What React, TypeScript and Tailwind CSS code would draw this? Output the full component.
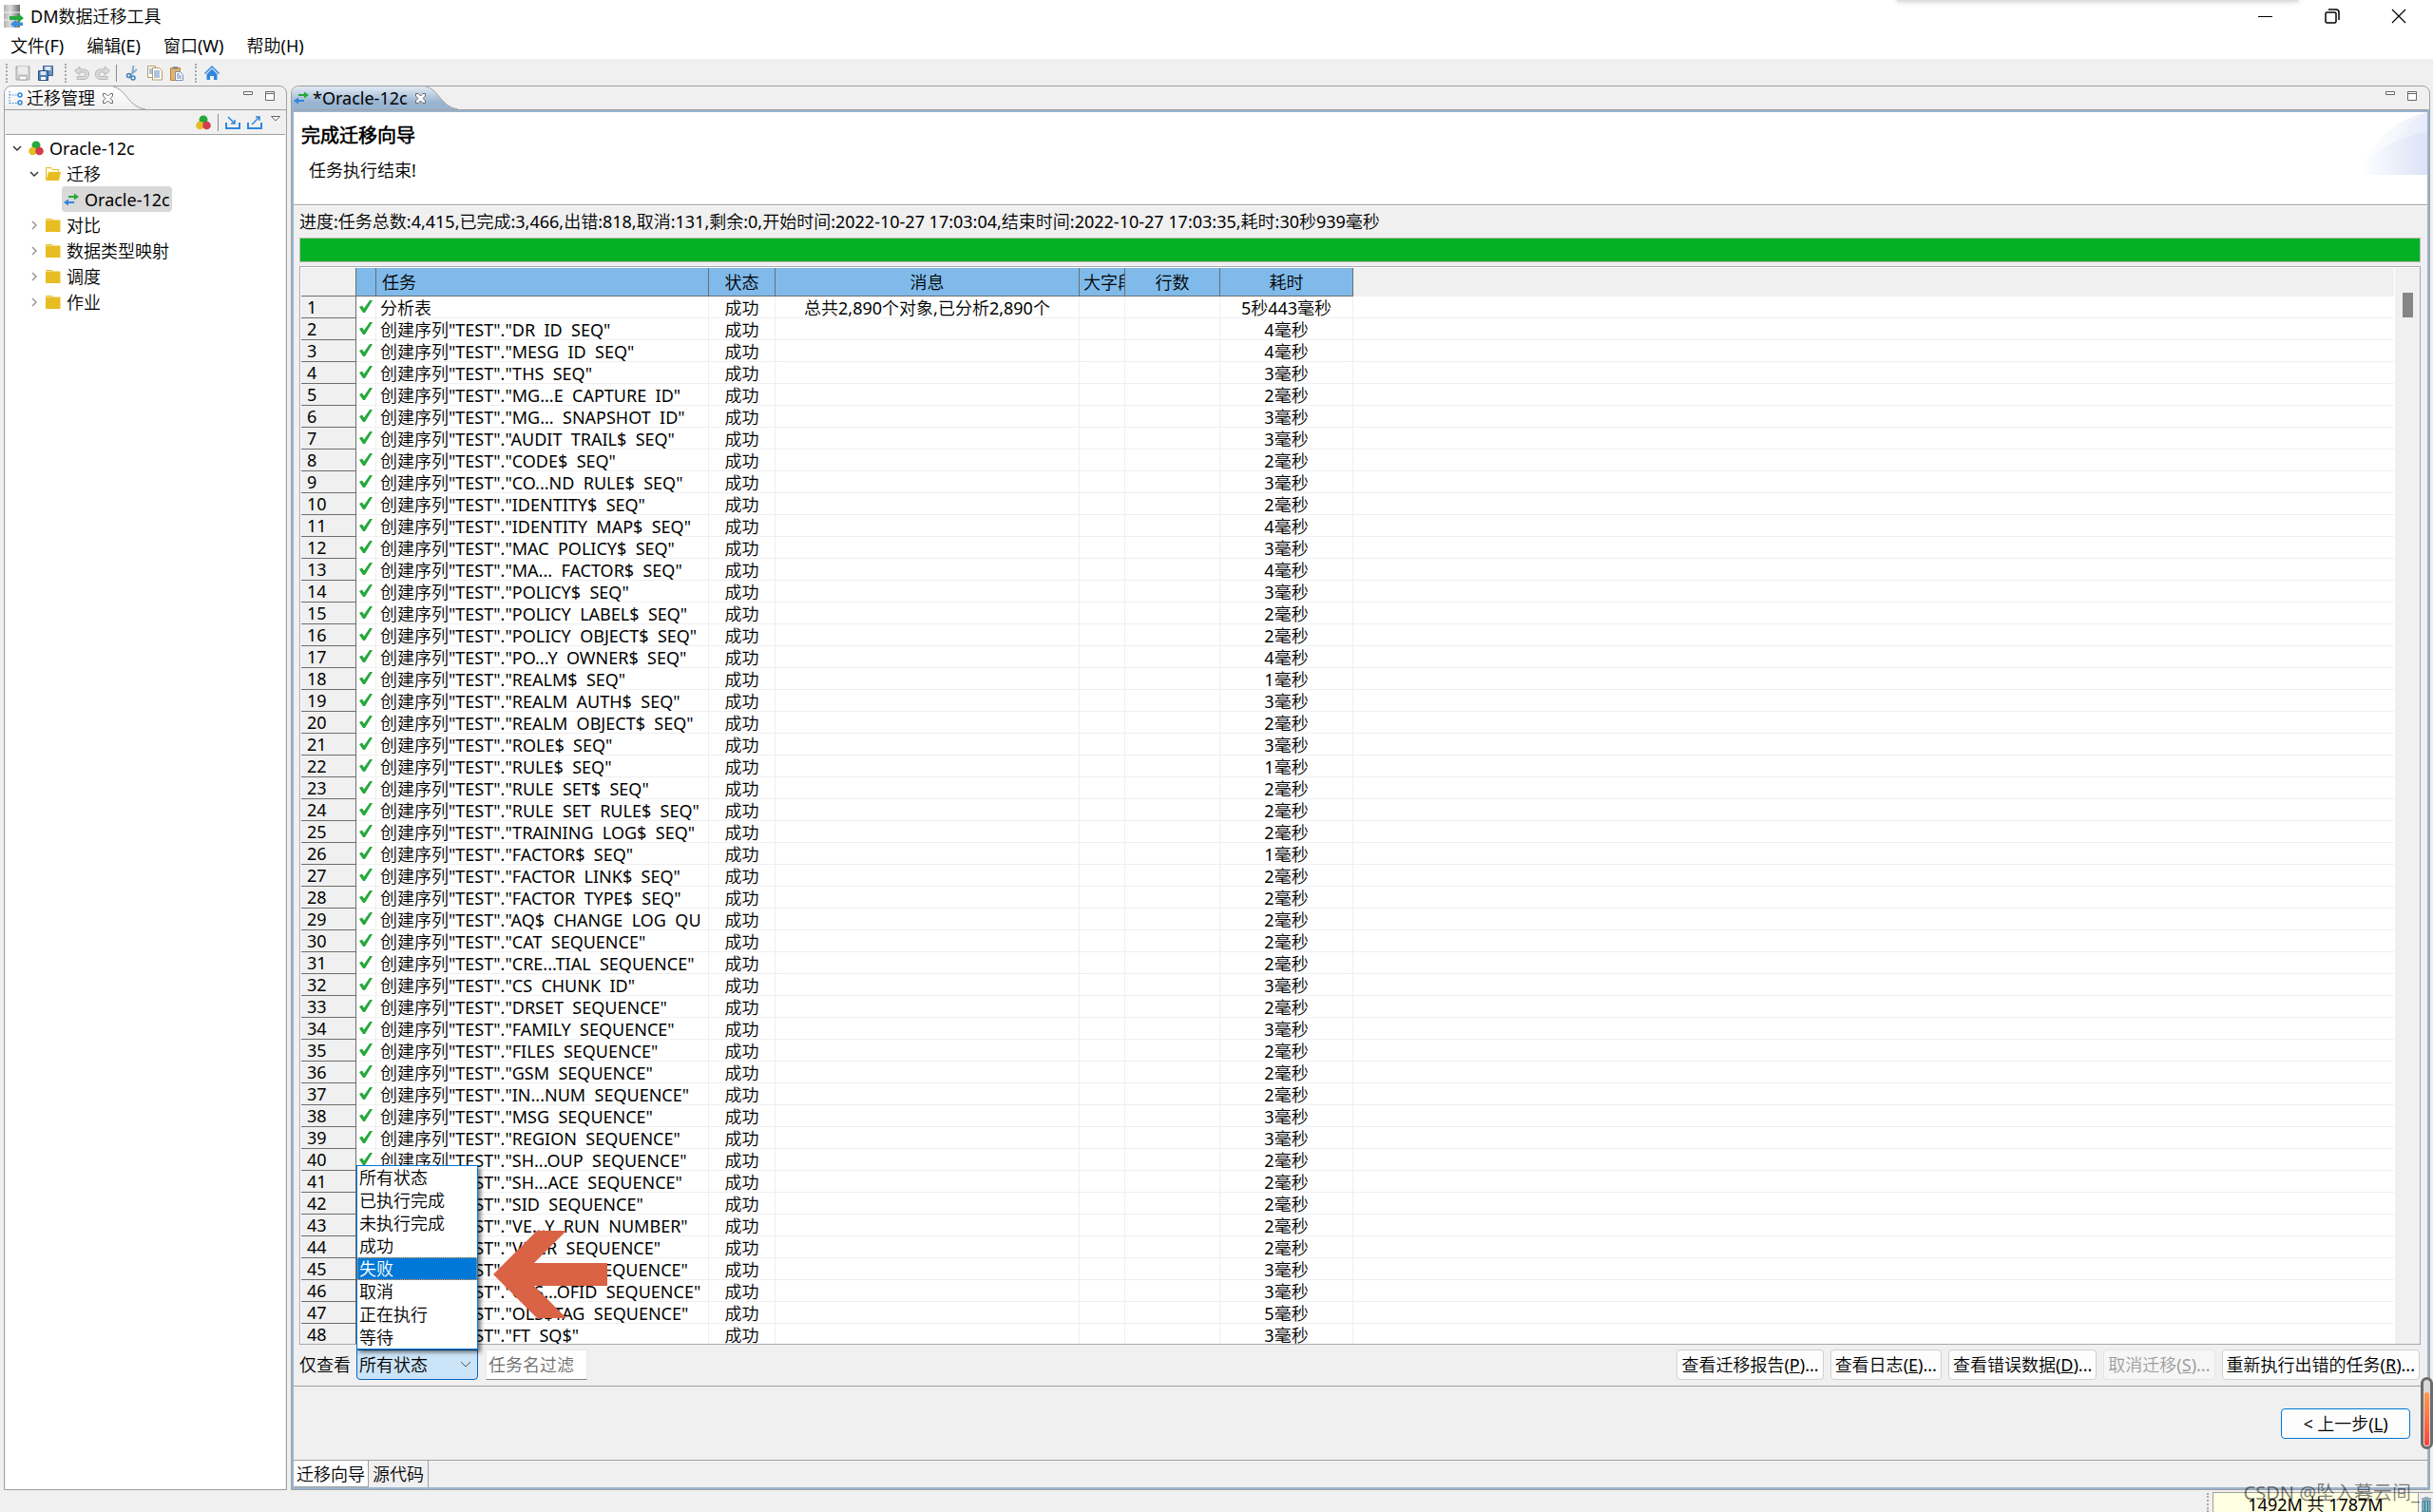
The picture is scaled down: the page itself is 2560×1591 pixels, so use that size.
import { ReactNode } from 'react'

// [task name, time in ms, name runs past the column edge]
const tasks: [string, string, boolean?][] = [
  ['DR ID SEQ', '4'],
  ['MESG ID SEQ', '4'],
  ['THS SEQ', '3'],
  ['MG...E CAPTURE ID', '2'],
  ['MG... SNAPSHOT ID', '3'],
  ['AUDIT TRAIL$ SEQ', '3'],
  ['CODE$ SEQ', '2'],
  ['CO...ND RULE$ SEQ', '3'],
  ['IDENTITY$ SEQ', '2'],
  ['IDENTITY MAP$ SEQ', '4'],
  ['MAC POLICY$ SEQ', '3'],
  ['MA... FACTOR$ SEQ', '4'],
  ['POLICY$ SEQ', '3'],
  ['POLICY LABEL$ SEQ', '2'],
  ['POLICY OBJECT$ SEQ', '2'],
  ['PO...Y OWNER$ SEQ', '4'],
  ['REALM$ SEQ', '1'],
  ['REALM AUTH$ SEQ', '3'],
  ['REALM OBJECT$ SEQ', '2'],
  ['ROLE$ SEQ', '3'],
  ['RULE$ SEQ', '1'],
  ['RULE SET$ SEQ', '2'],
  ['RULE SET RULE$ SEQ', '2'],
  ['TRAINING LOG$ SEQ', '2'],
  ['FACTOR$ SEQ', '1'],
  ['FACTOR LINK$ SEQ', '2'],
  ['FACTOR TYPE$ SEQ', '2'],
  ['AQ$ CHANGE LOG QU', '2', true],
  ['CAT SEQUENCE', '2'],
  ['CRE...TIAL SEQUENCE', '2'],
  ['CS CHUNK ID', '3'],
  ['DRSET SEQUENCE', '2'],
  ['FAMILY SEQUENCE', '3'],
  ['FILES SEQUENCE', '2'],
  ['GSM SEQUENCE', '2'],
  ['IN...NUM SEQUENCE', '2'],
  ['MSG SEQUENCE', '3'],
  ['REGION SEQUENCE', '3'],
  ['SH...OUP SEQUENCE', '2'],
  ['SH...ACE SEQUENCE', '2'],
  ['SID SEQUENCE', '2'],
  ['VE...Y RUN NUMBER', '2'],
  ['VNCR SEQUENCE', '2'],
  ['OLS$LAB SEQUENCE', '3'],
  ['OLS...OFID SEQUENCE', '3'],
  ['OLS$TAG SEQUENCE', '5'],
  ['FT SQ$', '3'],
]

const rows = [
  { task: '分析表', message: '总共2,890个对象,已分析2,890个', time: '5秒443毫秒' },
  ...tasks.map(([name, ms, long]) => ({
    task: `创建序列"TEST"."${name.replace(/ /g, '  ')}${long ? '' : '"'}`,
    message: '',
    time: `${ms}毫秒`,
  })),
]

const states = ['所有状态', '已执行完成', '未执行完成', '成功', '失败', '取消', '正在执行', '等待']

const menus = ['文件(F)', '编辑(E)', '窗口(W)', '帮助(H)']

const folders = ['对比', '数据类型映射', '调度', '作业']

const headCell = 'border-r border-b border-[#6d6d6d] bg-[#7fbaea] font-normal'
const cell = 'h-[23px] overflow-hidden border-r border-b border-[#efefef] p-0 leading-5'

function AppIcon() {
  return (
    <svg className="h-6 w-[22px]" viewBox="0 0 22 24">
      <defs>
        <linearGradient id="disk" x1="0" x2="1">
          <stop offset="0" stopColor="#b4b4b4" />
          <stop offset="0.400" stopColor="#dcdcdc" />
          <stop offset="1" stopColor="#6a6a6a" />
        </linearGradient>
      </defs>
      <rect x="0" y="0" width="17" height="8" fill="url(#disk)" />
      <rect x="0" y="8" width="17" height="8" fill="url(#disk)" />
      <rect x="0" y="16" width="17" height="8" fill="url(#disk)" />
      <path d="M0 8h17M0 16h17" stroke="#f4f4f4" />
      <path d="M6 12h9V9l6 5-6 5v-3H6z" fill="#25a83c" />
      <path d="M20 18.500h-7V16l-6 4.500 6 4V22h7z" fill="#3a8ee0" />
    </svg>
  )
}

function ArrowsIcon() {
  return (
    <svg className="h-4 w-4 shrink-0" viewBox="0 0 16 16">
      <path d="M5 4h6V1.500l5 3.500-5 3.500V6H5z" fill="#25a83c" />
      <path d="M11 10H5V7.500L0 11l5 3.500V12h6z" fill="#2f86dc" />
    </svg>
  )
}

function BallsIcon() {
  return (
    <svg className="h-4 w-4 shrink-0" viewBox="0 0 16 16">
      <circle cx="8" cy="5" r="4.500" fill="#25a83c" />
      <circle cx="4.500" cy="11" r="4.300" fill="#e7bd23" />
      <circle cx="11.500" cy="11" r="4.300" fill="#d23c4e" />
    </svg>
  )
}

function Folder({ open }: { open?: boolean }) {
  return (
    <svg className="h-4 w-4 shrink-0" viewBox="0 0 16 16">
      {open ? (
        <>
          <path d="M.5 14V1.500h5.500l1.500 2h6V7" fill="#fff8dc" stroke="#e7bd23" />
          <path d="M3 6h13l-2 9H.5z" fill="#e7bd23" />
        </>
      ) : (
        <>
          <path d="M.5 2V1.500h6L8 3" fill="none" stroke="#e7bd23" />
          <path d="M0 2.500h15.500V15H0z" fill="#e7bd23" />
        </>
      )}
    </svg>
  )
}

function Chevron({ open }: { open?: boolean }) {
  return (
    <svg className="h-3 w-3 shrink-0" viewBox="0 0 12 12" fill="none">
      {open ? <path d="M2 4l4 4 4-4" stroke="#333" strokeWidth="1.500" /> : <path d="M4 2l4 4-4 4" stroke="#999" strokeWidth="1.500" />}
    </svg>
  )
}

function TabClose() {
  return (
    <svg className="h-[11px] w-[11px]" viewBox="0 0 11 11">
      <path d="M.5.5h2.500l2.500 2.500L8 .5h2.500V3L8 5.500 10.500 8v2.500H8L5.500 8 3 10.500H.5V8L3 5.500.5 3z" fill="#fff" stroke="#666" />
    </svg>
  )
}

function TabCurve({ active }: { active?: boolean }) {
  return (
    <svg className="h-6 w-[34px] shrink-0" viewBox="0 0 34 24">
      <defs>
        <linearGradient id="tabBlue" x1="0" y1="0" x2="0" y2="1">
          <stop offset="0" stopColor="#e3ebf3" />
          <stop offset="0.700" stopColor="#99b4d1" />
        </linearGradient>
        <linearGradient id="tabWhite" x1="0" y1="0" x2="0" y2="1">
          <stop offset="0" stopColor="#fff" />
          <stop offset="1" stopColor="#f0f0f0" />
        </linearGradient>
      </defs>
      <path d="M0 0C14 3 16 22 34 24H0z" fill={active ? 'url(#tabBlue)' : 'url(#tabWhite)'} />
      <path d="M0 0C14 3 16 22 34 24" fill="none" stroke="#a0a0a0" />
    </svg>
  )
}

function PaneButtons() {
  return (
    <div className="flex items-start gap-[13px] pt-1">
      <button type="button" aria-label="最小化">
        <svg className="h-3 w-[10px]" viewBox="0 0 10 12"><path d="M.5 1.500h9v3h-9z" fill="#fff" stroke="#666" /></svg>
      </button>
      <button type="button" aria-label="最大化">
        <svg className="h-3 w-[10px]" viewBox="0 0 10 12"><path d="M.5 1.500h9v9h-9zM.5 3.500h9" fill="#fff" stroke="#666" /></svg>
      </button>
    </div>
  )
}

function Grip() {
  return <div className="h-5 border-l-2 border-dotted border-[#a8a8a8]" />
}

function ToolBar() {
  return (
    <div className="flex h-7 items-center bg-[#f0f0f0] pt-[2px] pl-[6px]">
      <Grip />
      <button type="button" aria-label="保存" className="ml-2">
        <svg className="h-4 w-4" viewBox="0 0 16 16">
          <path d="M1 1h14v14H1z" fill="#d4d4d4" stroke="#a6a6a6" />
          <path d="M3 1h10v8H3z" fill="#ececec" />
          <path d="M4 11h8v4H4z" fill="#fafafa" stroke="#a6a6a6" />
        </svg>
      </button>
      <button type="button" aria-label="全部保存" className="ml-2">
        <svg className="h-4 w-4" viewBox="0 0 16 16">
          <path d="M5.500.5h10v10h-10z" fill="#6d94c6" stroke="#3c6294" />
          <path d="M7.500 1h6v4h-6z" fill="#dbe7f5" />
          <path d="M.5 5.500h10v10H.5z" fill="#4f7db5" stroke="#2c4f80" />
          <path d="M2.500 6h6v4h-6z" fill="#dbe7f5" />
          <path d="M3 12h5v3H3z" fill="#fff" />
        </svg>
      </button>
      <div className="ml-3"><Grip /></div>
      <button type="button" aria-label="撤消" className="ml-2">
        <svg className="h-4 w-4" viewBox="0 0 16 16" strokeLinejoin="round">
          <path d="M6 1v3h5q4.500.5 4.500 5t-4.500 5.500H3v-3h7q2-.5 2-2.500t-2-2H6v3L.5 5.500z" fill="#dadada" stroke="#b8b8b8" />
        </svg>
      </button>
      <button type="button" aria-label="重做" className="ml-[6px]">
        <svg className="h-4 w-4" viewBox="0 0 16 16" strokeLinejoin="round">
          <path d="M10 1v3H5Q.5 4.500.5 9T5 14.500h8v-3H6Q4 11 4 9t2-2h4v3l5.500-4.500z" fill="#dadada" stroke="#b8b8b8" />
        </svg>
      </button>
      <div className="ml-[6px] h-[18px] w-px bg-[#8c8c8c]" />
      <button type="button" aria-label="剪切" className="ml-2">
        <svg className="h-4 w-4" viewBox="0 0 16 16" fill="none">
          <path d="M9.500 0L8 9M13 4L6 10" stroke="#8cadcb" strokeWidth="2" />
          <circle cx="4.500" cy="10.500" r="2" stroke="#3f80bd" strokeWidth="1.500" />
          <circle cx="9" cy="13" r="2" stroke="#3f80bd" strokeWidth="1.500" />
        </svg>
      </button>
      <button type="button" aria-label="复制" className="ml-2">
        <svg className="h-4 w-4" viewBox="0 0 16 16">
          <path d="M.5.500h8v12h-8z" fill="#fff" stroke="#b89b62" />
          <path d="M5.500 2.500h7l3 3v9.500h-10z" fill="#fff" stroke="#b89b62" />
          <path d="M2 4h3M2 6h3M2 8h3M7 6h6M7 8h6M7 10h6M7 12h6" stroke="#5b86bd" />
        </svg>
      </button>
      <button type="button" aria-label="粘贴" className="ml-2">
        <svg className="h-4 w-4" viewBox="0 0 16 16">
          <path d="M.5 2.500h10v13H.5z" fill="#e3b46d" stroke="#b98238" />
          <path d="M3 1h5v3H3z" fill="#8a8f96" />
          <path d="M5.500 6.500h5l3 3v6h-8z" fill="#fff" stroke="#7390b5" />
          <path d="M7 9h3M7 11h5M7 13h5" stroke="#5b86bd" />
        </svg>
      </button>
      <div className="ml-[10px]"><Grip /></div>
      <button type="button" aria-label="主页" className="ml-2">
        <svg className="h-4 w-4" viewBox="0 0 16 16">
          <path d="M8 0l8 8-1 1-7-7-7 7-1-1z" fill="#2f86dc" />
          <path d="M8 3.500l5.500 5.500v6H10v-4H6v4H2.500V9z" fill="#2f86dc" />
        </svg>
      </button>
    </div>
  )
}

function ActionButton({ text, hotkey, disabled }: { text: string; hotkey: string; disabled?: boolean }) {
  return (
    <button
      type="button"
      disabled={disabled}
      className="h-8 whitespace-nowrap rounded border border-[#d0d0d0] bg-[#fdfdfd] px-1 disabled:border-[#e6e6e6] disabled:bg-[#f6f6f6] disabled:text-[#9d9d9d]"
    >
      {text}(<u>{hotkey}</u>)...
    </button>
  )
}

function TreeRow({ className, children }: { className: string; children: ReactNode }) {
  return <li className={`flex h-[27px] items-center gap-[6px] ${className}`}>{children}</li>
}

function Sidebar() {
  return (
    <aside className="flex w-[298px] shrink-0 flex-col rounded-t-lg border border-[#a0a0a0] bg-[#f0f0f0]">
      <div className="flex h-6 justify-between">
        <div className="flex">
          <div className="flex items-center gap-1 rounded-tl-lg bg-linear-to-b from-white to-[#f0f0f0] pl-1">
            <svg className="h-[15px] w-[15px]" viewBox="0 0 15 15" fill="none" stroke="#2f86dc">
              <path d="M1 0v13M1 4h8M1 12.500h8" strokeDasharray="1.500 1.500" />
              <circle cx="12" cy="4" r="2" strokeWidth="1.500" />
              <circle cx="12" cy="12" r="2" strokeWidth="1.500" />
            </svg>
            <span>迁移管理</span>
            <span className="ml-1"><TabClose /></span>
          </div>
          <TabCurve />
        </div>
        <div className="pr-3"><PaneButtons /></div>
      </div>
      <div className="flex h-[26px] items-center justify-end gap-[7px] border-t border-[#a0a0a0] pr-[6px]">
        <BallsIcon />
        <div className="h-[18px] w-px bg-[#8c8c8c]" />
        <svg className="h-4 w-4" viewBox="0 0 16 16" fill="none" stroke="#2f86dc" strokeWidth="2">
          <path d="M1 8v6h14V8" />
          <path d="M3 2l7 7M10 5v4H6" strokeWidth="1.500" />
        </svg>
        <svg className="mr-[2px] h-4 w-4" viewBox="0 0 16 16" fill="none" stroke="#2f86dc" strokeWidth="2">
          <path d="M1 8v6h14V8" />
          <path d="M5 10l8-8M9 2h4v4" strokeWidth="1.500" />
        </svg>
        <svg className="h-4 w-[10px]" viewBox="0 0 10 16"><path d="M.5 1.500h9L5 6z" fill="#fff" stroke="#666" /></svg>
      </div>
      <ul className="mx-px flex-1 border-t border-[#a0a0a0] bg-white">
        <TreeRow className="pl-[6px]"><Chevron open /><BallsIcon />Oracle-12c</TreeRow>
        <TreeRow className="pl-6"><Chevron open /><Folder open />迁移</TreeRow>
        <TreeRow className="pl-[59px]">
          <span className="flex h-[27px] items-center gap-[6px] rounded-sm bg-[#d9d9d9] px-[2px]"><ArrowsIcon />Oracle-12c</span>
        </TreeRow>
        {folders.map((name) => (
          <TreeRow key={name} className="pl-6"><Chevron /><Folder />{name}</TreeRow>
        ))}
      </ul>
    </aside>
  )
}

function TaskTable() {
  return (
    <div className="flex min-h-0 flex-1 overflow-hidden border border-[#a9a9b3] bg-white pt-px pl-px">
      <div className="min-w-0 flex-1 overflow-hidden">
        <div className="flex">
          <table className="w-[1107px] shrink-0 table-fixed border-separate border-spacing-0">
            <colgroup>
              <col className="w-[58px]" />
              <col className="w-[21px]" />
              <col className="w-[350px]" />
              <col className="w-[70px]" />
              <col className="w-[320px]" />
              <col className="w-[48px]" />
              <col className="w-[100px]" />
              <col className="w-[140px]" />
            </colgroup>
            <thead>
              <tr className="h-[30px]">
                <th className="border-r border-b border-[#6d6d6d] bg-[#f0f0f0]" />
                <th className={headCell} />
                <th className={`${headCell} pl-[6px] text-left`}>任务</th>
                <th className={headCell}>状态</th>
                <th className={headCell}>消息</th>
                <th className={`${headCell} overflow-hidden whitespace-nowrap pl-1 text-left`}>大字段</th>
                <th className={headCell}>行数</th>
                <th className={headCell}>耗时</th>
              </tr>
            </thead>
            <tbody>
              {rows.map((row, i) => (
                <tr key={i}>
                  <td className="h-[23px] border-r border-b border-[#6d6d6d] bg-[#f0f0f0] py-0 pl-[6px] leading-[22px]">{i + 1}</td>
                  <td className={cell}>
                    <svg className="mx-auto h-[14px] w-[14px]" viewBox="0 0 14 14">
                      <path d="M0 7l3-1.500 2 3L11 0h3L6 13H4z" fill="#25a83c" />
                    </svg>
                  </td>
                  <td className={`${cell} whitespace-pre pt-[2px] pl-1`}>{row.task}</td>
                  <td className={`${cell} pt-[2px] text-center`}>成功</td>
                  <td className={`${cell} whitespace-nowrap pt-[2px] text-center`}>{row.message}</td>
                  <td className={cell} />
                  <td className={cell} />
                  <td className={`${cell} pt-[2px] text-center`}>{row.time}</td>
                </tr>
              ))}
            </tbody>
          </table>
          <div className="flex-1">
            <div className="h-[30px] bg-[#f0f0f0]" />
            {rows.map((_, i) => (
              <div key={i} className="h-[23px] border-b border-[#efefef]" />
            ))}
          </div>
        </div>
      </div>
      <div className="ml-px flex w-[26px] justify-center bg-[#f0f0f0] pt-[26px]">
        <div className="h-[26px] w-[11px] bg-[#868686]" />
      </div>
    </div>
  )
}

function StateFilter() {
  return (
    <div className="relative">
      <select
        id="state"
        defaultValue="所有状态"
        className="block h-8 w-32 appearance-none rounded-b-sm border border-[#0067c0] bg-[#cce4f7] pl-[2px]"
      >
        {states.map((s) => <option key={s}>{s}</option>)}
      </select>
      <svg className="pointer-events-none absolute top-3 right-[7px] h-2 w-3" viewBox="0 0 12 8" fill="none">
        <path d="M1 1l5 5 5-5" stroke="#555" />
      </svg>
      <ul className="absolute bottom-full left-0 w-32 border border-[#0078d7] bg-white shadow-[3px_3px_4px_rgba(0,0,0,0.5)]">
        {states.map((s) => (
          <li key={s} className={`h-6 pl-[2px] leading-6 ${s === '失败' ? 'bg-[#0078d7] text-white outline-1 -outline-offset-1 outline-dotted outline-[#ff9a3c]' : ''}`}>
            {s}
          </li>
        ))}
      </ul>
      <svg className="absolute bottom-[65px] left-[144px] h-[92px] w-[120px]" viewBox="0 0 120 92">
        <path d="M0 46L46 0h31L43 34h77v24H43l34 34H46z" fill="#d96344" />
      </svg>
    </div>
  )
}

function Editor() {
  return (
    <main className="flex min-w-0 flex-1 flex-col rounded-t-lg border border-[#a0a0a0] bg-[#f0f0f0]">
      <div className="flex h-6 justify-between">
        <div className="flex">
          <div className="flex items-center gap-1 rounded-tl-lg bg-linear-to-b from-[#e3ebf3] to-[#99b4d1] to-70% pl-[2px]">
            <ArrowsIcon />
            <span>*Oracle-12c</span>
            <span className="ml-1"><TabClose /></span>
          </div>
          <TabCurve active />
        </div>
        <div className="pr-[13px]"><PaneButtons /></div>
      </div>
      <div className="flex min-h-0 flex-1 flex-col border-2 border-t-0 border-[#99b4d1]">
        <div className="h-[3px] shrink-0 border-t border-[#a0a0a0] bg-[#99b4d1]" />
        <div className="flex h-[98px] shrink-0 justify-between border-b border-[#a0a0a0] bg-white">
          <div className="pt-[11px] pl-2">
            <h1 className="text-[20px] font-bold leading-7">完成迁移向导</h1>
            <p className="mt-2 pl-2 leading-7">任务执行结束!</p>
          </div>
          <svg className="h-[66px] w-[72px]" viewBox="0 0 72 66">
            <defs>
              <linearGradient id="wave" x1="0" x2="1">
                <stop offset="0" stopColor="#fff" />
                <stop offset="1" stopColor="#dbe3f7" />
              </linearGradient>
            </defs>
            <path d="M0 66C12 34 34 8 72 0v66z" fill="url(#wave)" opacity="0.500" />
            <path d="M32 40C42 24 54 8 72 0v66H10z" fill="url(#wave)" opacity="0.400" />
            <path d="M0 66C14 44 36 26 72 21v45z" fill="url(#wave)" />
          </svg>
        </div>
        <div className="flex min-h-0 flex-1 flex-col border-t border-white pr-[7px] pl-[6px]">
          <p className="h-[33px] shrink-0 leading-8">
            进度:任务总数:4,415,已完成:3,466,出错:818,取消:131,剩余:0,开始时间:2022-10-27 17:03:04,结束时间:2022-10-27 17:03:35,耗时:30秒939毫秒
          </p>
          <div className="mb-1 h-[26px] shrink-0 border border-[#b8b8b8] bg-[#06b025]" />
          <TaskTable />
          <div className="flex h-[43px] shrink-0 items-center pb-[2px]">
            <label htmlFor="state" className="w-[60px]">仅查看</label>
            <StateFilter />
            <input
              type="text"
              aria-label="任务名过滤"
              placeholder="任务名过滤"
              className="ml-2 h-8 w-[107px] border border-[#e8e8e8] border-b-[#868686] bg-white pl-[2px] placeholder:text-[#6d6d6d]"
            />
            <div className="ml-auto flex gap-[7px] pr-px">
              <ActionButton text="查看迁移报告" hotkey="P" />
              <ActionButton text="查看日志" hotkey="E" />
              <ActionButton text="查看错误数据" hotkey="D" />
              <ActionButton text="取消迁移" hotkey="S" disabled />
              <ActionButton text="重新执行出错的任务" hotkey="R" />
            </div>
          </div>
        </div>
        <div className="flex h-[78px] shrink-0 items-center justify-end border-t border-[#a0a0a0] pr-[18px]">
          <button type="button" className="h-8 w-[136px] rounded border border-[#0078d4] bg-[#fdfdfd]">
            &lt; 上一步(<u>L</u>)
          </button>
        </div>
        <div role="tablist" className="flex h-[29px] shrink-0 border-t border-[#a0a0a0]">
          <button type="button" role="tab" className="border-r border-b border-[#a0a0a0] bg-white px-[3px]">迁移向导</button>
          <button type="button" role="tab" className="border-r border-[#a0a0a0] px-1">源代码</button>
        </div>
      </div>
    </main>
  )
}

export default function App() {
  return (
    <div className="relative flex h-screen flex-col overflow-hidden bg-[#f0f0f0] font-['Noto_Sans','Noto_Sans_CJK_SC_DemiLight','Noto_Sans_CJK_SC',sans-serif] text-[18px] leading-6 text-black">
      <header className="bg-white">
        <div className="flex h-[34px] items-center pl-1">
          <AppIcon />
          <span className="ml-[6px]">DM数据迁移工具</span>
          <div className="ml-auto flex items-center gap-[54px] pr-[28px]">
            <button type="button" aria-label="最小化">
              <svg className="h-4 w-4" viewBox="0 0 16 16"><path d="M0 8.500h15" stroke="#000" /></svg>
            </button>
            <button type="button" aria-label="还原">
              <svg className="h-4 w-4" viewBox="0 0 16 16" fill="none" stroke="#000" strokeWidth="1.500">
                <rect x="1" y="4" width="11" height="11" rx="1.500" />
                <path d="M4 1h8q3 0 3 3v8" />
              </svg>
            </button>
            <button type="button" aria-label="关闭">
              <svg className="h-4 w-4" viewBox="0 0 16 16"><path d="M1 1l14 14M15 1L1 15" stroke="#000" strokeWidth="1.200" /></svg>
            </button>
          </div>
        </div>
        <nav className="flex h-7 gap-6 pl-[11px]">
          {menus.map((m) => <button type="button" key={m}>{m}</button>)}
        </nav>
      </header>
      <div className="absolute -top-1 right-[142px] h-[6px] w-[422px] bg-[#e0e0e0] shadow-[0_0_6px_#d0d0d0]" />
      <ToolBar />
      <div className="flex min-h-0 flex-1 gap-1 pr-[3px] pl-1">
        <Sidebar />
        <Editor />
      </div>
      <footer className="flex h-[23px] items-end justify-end overflow-hidden">
        <div className="mr-1 h-5 border-l-2 border-dotted border-[#a8a8a8]" />
        <div className="h-[21px] w-[216px] border-t border-l border-[#a0a0a0] bg-[#ffffe1] text-center">1492M 共 1787M</div>
        <div className="flex h-[21px] w-4 justify-center border-t border-l border-[#a0a0a0] pt-1">
          <svg className="h-4 w-[10px]" viewBox="0 0 10 16"><path d="M0 2h10M3 0h4M1 4h8v12H1zM3.500 5v10M6.500 5v10" fill="#8cc0c8" stroke="#2c6b86" /></svg>
        </div>
      </footer>
      <div className="absolute right-[14px] bottom-2 text-[20px] text-black/50">CSDN @坠入暮云间_</div>
      <div className="absolute right-0 bottom-[66px] flex h-[76px] w-[13px] items-end rounded-full border-3 border-[#6c6c6c] bg-[#d8d8d8] p-px">
        <div className="h-[56px] w-full rounded-full bg-linear-to-b from-[#ff9a4a] to-[#ff3c3c]" />
      </div>
    </div>
  )
}
